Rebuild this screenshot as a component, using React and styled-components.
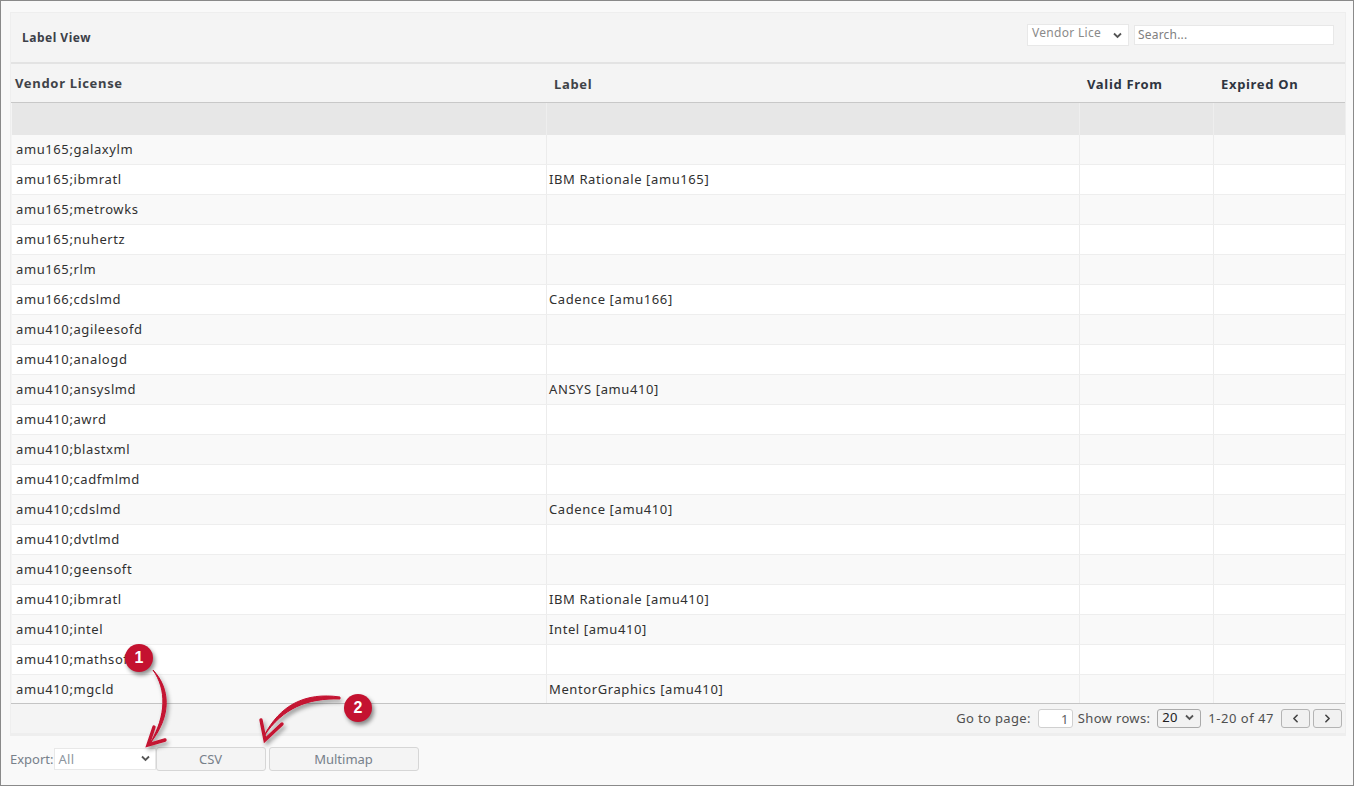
import React from "react";
import styled, { createGlobalStyle } from "styled-components";
import { ChevronLeft, ChevronRight } from "lucide-react";

const Global = createGlobalStyle`
  html, body { margin: 0; padding: 0; background: #f9f9f9; }
  body { font-family: "Noto Sans", "Open Sans", sans-serif; }
  * { box-sizing: border-box; }
`;

const Frame = styled.div`
  position: relative;
  width: 1354px;
  height: 786px;
  border: 1px solid #8a8a8a;
  background: #f9f9f9;
  padding: 11px 7px 0 9px;
  overflow: hidden;
`;
const Panel = styled.section`
  width: 1336px;
  background: #f4f4f4;
  border-top: 1px solid #eeeeee;
  border-left: 1px solid #eeeeee;
  border-right: 1px solid #eeeeee;
  border-bottom: 3px solid #eeeeee;
`;
const TitleBar = styled.header`
  display: flex;
  align-items: center;
  justify-content: space-between;
  height: 51px;
  padding: 0 11px 0 11px;
  border-bottom: 2px solid #e3e3e3;
`;
const Title = styled.h2`
  margin: 0;
  font-size: 12px;
  font-weight: 700;
  letter-spacing: 0.5px;
  color: #3c4048;
`;
const Controls = styled.div`
  display: flex;
  align-items: center;
  gap: 5px;
  margin-top: -6px;
`;
const FakeSelect = styled.div`
  display: flex;
  justify-content: space-between;
  width: ${p => p.$w}px;
  height: ${p => p.$h}px;
  background: #fff;
  border: 1px solid #e8e8e8;
  color: #8a8a8a;
  font-size: 12px;
  letter-spacing: 0.3px;
  padding: 0 6px 0 4px;
  line-height: 16px;
  overflow: hidden;
  white-space: nowrap;
`;
const Caret = styled.svg`
  flex: none;
  width: 9px;
  height: 7px;
  margin-top: ${p => p.$top}px;
`;
const SearchInput = styled.input`
  width: 200px;
  height: 20px;
  background: #fff;
  border: 1px solid #e8e8e8;
  padding: 0 3px;
  font: 12px "Noto Sans", sans-serif;
  letter-spacing: 0.2px;
  outline: none;
  &::placeholder { color: #808080; opacity: 1; }
`;
const Columns = "535px 533px 134px 131px";
const HeadRow = styled.div`
  display: grid;
  grid-template-columns: ${Columns};
  height: 39px;
  border-bottom: 1px solid #c8c8c8;
  background: #f4f4f4;
`;
const HeadCell = styled.div`
  font-size: 13px;
  font-weight: 700;
  letter-spacing: 0.68px;
  color: ${p => p.$dark ? "#2f3540" : "#3f4348"};
  padding: ${p => p.$top}px 0 0 ${p => p.$pl}px;
  line-height: 18px;
`;
const Body = styled.div`
  padding-left: 1px;
`;
const FilterRow = styled.div`
  display: grid;
  grid-template-columns: ${Columns};
  height: 32px;
  background: #e7e7e7;
`;
const Row = styled.div`
  display: grid;
  grid-template-columns: ${Columns};
  height: ${p => p.$last ? 28 : 30}px;
  background: ${p => p.$odd ? "#f9f9f9" : "#ffffff"};
  border-bottom: ${p => p.$last ? 0 : 1}px solid #eeeeee;
`;
const Cell = styled.div`
  font-size: 13px;
  letter-spacing: 0.6px;
  color: #303030;
  line-height: 28px;
  padding-left: ${p => p.$pl || 4}px;
  border-right: 1px solid ${p => p.$filter ? "#eeeeee" : "#ececec"};
  white-space: nowrap;
  &:last-child { border-right: 0; }
`;
const Pager = styled.footer`
  display: flex;
  align-items: center;
  justify-content: flex-end;
  height: 30px;
  border-top: 1px solid #c4c4c4;
  padding: 0 3px 1px 0;
  font-size: 13px;
  color: #505050;
  letter-spacing: 0.35px;
`;
const Count = styled.span`
  letter-spacing: 0.52px;
`;
const PageInput = styled.div`
  width: 35px;
  height: 19px;
  margin: 0 5px 0 7px;
  background: #fff;
  border: 1px solid #d0d0d0;
  border-radius: 3px;
  text-align: right;
  padding-right: 3px;
  line-height: 18px;
  color: #606060;
`;
const RowsSelect = styled.div`
  display: flex;
  justify-content: space-between;
  width: 44px;
  height: 19px;
  margin: 0 7px 0 7px;
  border: 1px solid #aaaaaa;
  border-radius: 3px;
  background: #f2f2f2;
  color: #202020;
  padding: 0 6px 0 4px;
  line-height: 15px;
`;
const PageButton = styled.button`
  display: flex;
  align-items: center;
  justify-content: center;
  width: 29px;
  height: 19px;
  margin-left: ${p => p.$ml}px;
  padding: 0;
  border: 1px solid #b4b4b4;
  border-radius: 3px;
  background: #f1f1f1;
  color: #444;
`;
const ExportBar = styled.div`
  display: flex;
  align-items: center;
  height: 26px;
  margin-top: 10px;
  font-size: 13px;
  color: #77808a;
`;
const ExportSelect = styled(FakeSelect)`
  font-size: 13px;
  line-height: 21px;
  padding-right: 5px;
  color: #8e96a0;
`;
const ActionButton = styled.button`
  width: ${p => p.$w}px;
  height: 24px;
  margin-left: ${p => p.$ml}px;
  background: #f4f4f4;
  border: 1px solid #d6d6d6;
  border-radius: 3px;
  font: 13px "Noto Sans", sans-serif;
  color: #77808a;
  padding: 0;
`;
const Overlay = styled.svg`
  position: absolute;
  left: -1px;
  top: -1px;
  pointer-events: none;
`;
const Badge = styled.div`
  position: absolute;
  left: ${p => p.$x - 15}px;
  top: ${p => p.$y - 15}px;
  width: 28px;
  height: 28px;
  border-radius: 50%;
  background: #c41230;
  color: #fff;
  font: 700 16px/28px "Liberation Sans", sans-serif;
  text-align: center;
  box-shadow: 2px 3px 4px rgba(0,0,0,.45);
`;

const rows = [
  ["amu165;galaxylm", ""], ["amu165;ibmratl", "IBM Rationale [amu165]"], ["amu165;metrowks", ""],
  ["amu165;nuhertz", ""], ["amu165;rlm", ""], ["amu166;cdslmd", "Cadence [amu166]"],
  ["amu410;agileesofd", ""], ["amu410;analogd", ""], ["amu410;ansyslmd", "ANSYS [amu410]"],
  ["amu410;awrd", ""], ["amu410;blastxml", ""], ["amu410;cadfmlmd", ""],
  ["amu410;cdslmd", "Cadence [amu410]"], ["amu410;dvtlmd", ""], ["amu410;geensoft", ""],
  ["amu410;ibmratl", "IBM Rationale [amu410]"], ["amu410;intel", "Intel [amu410]"],
  ["amu410;mathsoft", ""], ["amu410;mgcld", "MentorGraphics [amu410]"],
];

const CaretIcon = ({ top }) => (
  <Caret $top={top} viewBox="0 0 9 7"><path d="M1 1.5 L4.5 5 L8 1.5" fill="none" stroke="#555" strokeWidth="1.8" /></Caret>
);

export default function App() {
  return (
    <Frame>
      <Global />
      <Panel>
        <TitleBar>
          <Title>Label View</Title>
          <Controls>
            <FakeSelect $w={102} $h={22}>Vendor Lice<CaretIcon top={7} /></FakeSelect>
            <SearchInput placeholder="Search..." readOnly />
          </Controls>
        </TitleBar>
        <HeadRow>
          <HeadCell $pl={4} $top={10}>Vendor License</HeadCell>
          <HeadCell $pl={8} $top={11}>Label</HeadCell>
          <HeadCell $pl={8} $top={11} $dark>Valid From</HeadCell>
          <HeadCell $pl={8} $top={11} $dark>Expired On</HeadCell>
        </HeadRow>
        <Body>
          <FilterRow>
            <Cell $filter /><Cell $filter /><Cell $filter /><Cell $filter />
          </FilterRow>
          {rows.map((r, i) => (
            <Row key={r[0]} $odd={i % 2 === 0} $last={i === rows.length - 1}>
              <Cell>{r[0]}</Cell>
              <Cell $pl={2}>{r[1]}</Cell>
              <Cell />
              <Cell />
            </Row>
          ))}
        </Body>
        <Pager>
          Go to page:
          <PageInput>1</PageInput>
          Show rows:
          <RowsSelect>20<CaretIcon top={4} /></RowsSelect>
          <Count>1-20 of 47</Count>
          <PageButton $ml={7}><ChevronLeft size={13} strokeWidth={3} /></PageButton>
          <PageButton $ml={3}><ChevronRight size={13} strokeWidth={3} /></PageButton>
        </Pager>
      </Panel>
      <ExportBar>
        Export:
        <ExportSelect $w={102} $h={22}>All<CaretIcon top={6} /></ExportSelect>
        <ActionButton $w={110} $ml={0}>CSV</ActionButton>
        <ActionButton $w={150} $ml={3}>Multimap</ActionButton>
      </ExportBar>
      <Overlay width="1354" height="786" viewBox="0 0 1354 786">
        <defs>
          <filter id="arrowShadow" x="-30%" y="-30%" width="160%" height="160%">
            <feDropShadow dx="2" dy="3" stdDeviation="2" floodColor="#000" floodOpacity=".4" />
          </filter>
        </defs>
        <g filter="url(#arrowShadow)">
          <path d="M153 670 C170 688 172 715 151 742 C166 715 167 690 153 670 Z" fill="#c41230" stroke="#c41230" strokeWidth="1" strokeLinejoin="round" />
          <path d="M154 727 L148 745 L165 740" fill="none" stroke="#c41230" strokeWidth="3.4" strokeLinecap="round" />
          <path d="M340 697 C305 692 280 705 264 736 C283 708 307 698 340 699 Z" fill="#c41230" stroke="#c41230" strokeWidth="1" strokeLinejoin="round" />
          <path d="M261 720 L265 740 L282 724" fill="none" stroke="#c41230" strokeWidth="3.4" strokeLinecap="round" />
        </g>
      </Overlay>
      <Badge $x={139} $y={658}>1</Badge>
      <Badge $x={358} $y={708}>2</Badge>
    </Frame>
  );
}
